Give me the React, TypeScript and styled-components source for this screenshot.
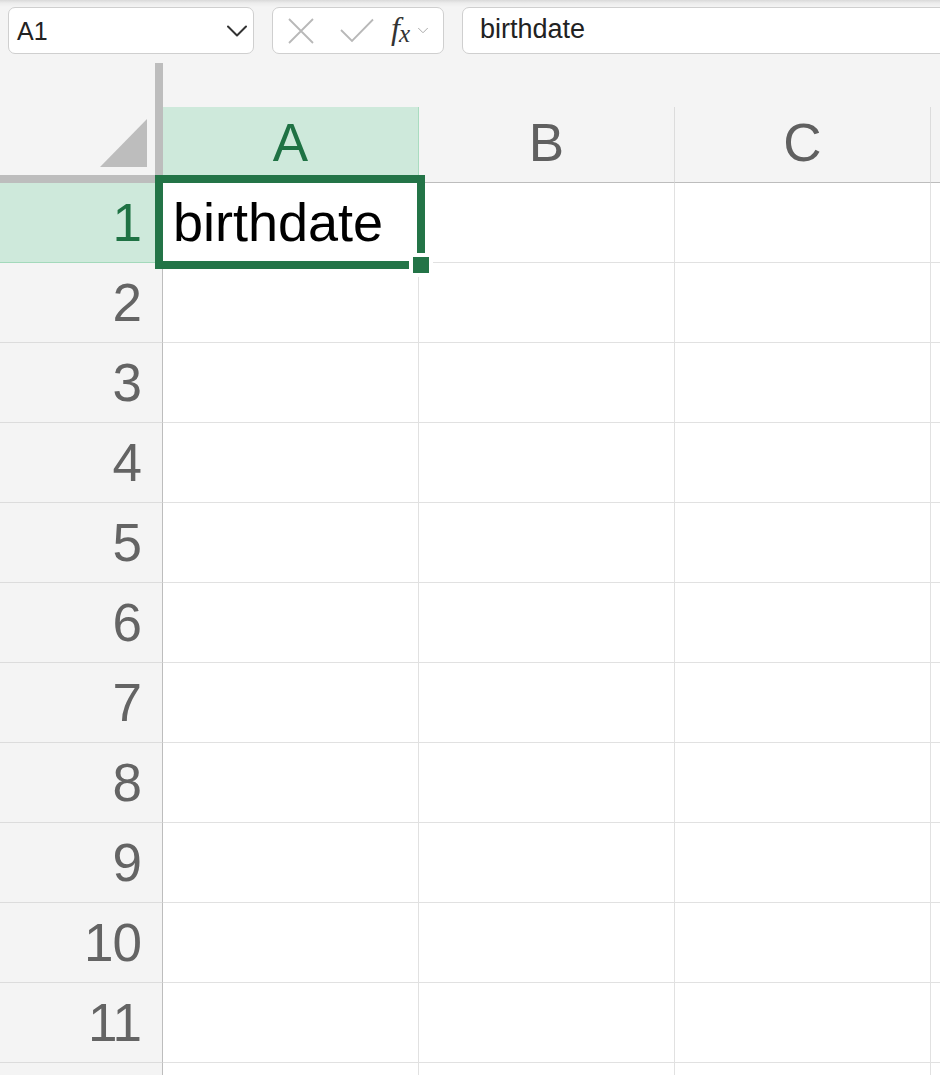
import React from "react"
import styled, { createGlobalStyle } from "styled-components"

const GlobalStyle = createGlobalStyle`
	html, body {
		margin: 0;
		padding: 0;
		background: #f4f4f4;
		overflow: hidden;
	}
	* {
		box-sizing: border-box;
	}
`

const GREEN = "#237447"
const GREEN_LIGHT = "#cee9db"
const COLS = ["A", "B", "C", ""]
// the last row only peeks in at the bottom edge, its label is off screen
const ROWS = [1, 2, 3, 4, 5, 6, 7, 8, 9, 10, 11, 0]

const Page = styled.div`
	width: 940px;
	height: 1075px;
	overflow: hidden;
	font-family: "Liberation Sans", Arial, sans-serif;
`

const Toolbar = styled.div`
	display: flex;
	gap: 18px;
	height: 54px;
	padding: 7px 0 0 8px;
	background: linear-gradient(#d9d9d9 0px, #ececec 3px, #f4f4f4 7px);
`

const Field = styled.div<{ $width?: number }>`
	display: flex;
	align-items: center;
	height: 47px;
	width: ${(p) => (p.$width ? `${p.$width}px` : "auto")};
	flex: ${(p) => (p.$width ? "none" : "1")};
	background: #fff;
	border: 1.5px solid #cfcfcf;
	border-radius: 7px;
	color: #222;
`

const NameText = styled.span`
	flex: 1;
	padding-left: 8px;
	font-size: 25px;
	padding-top: 2px;
`

const FormulaField = styled(Field)`
	margin-right: -20px;
	padding-left: 17px;
	font-size: 27px;
	padding-bottom: 3px;
`

const ActionRow = styled(Field)`
	padding-left: 15px;
`

const Fx = styled.span`
	margin-left: 17px;
	font-family: "Liberation Serif", serif;
	font-style: italic;
	font-size: 32px;
	color: #333;
	letter-spacing: -1px;
	padding-bottom: 4px;

	sub {
		font-size: 25px;
		vertical-align: -3px;
	}
`

const Sheet = styled.div`
	display: grid;
	grid-template-columns: 163px repeat(4, 256px);
	grid-template-rows: 129px;
	grid-auto-rows: 80px;
	font-size: 53px;
`

const Corner = styled.div`
	align-self: end;
	height: 120px;
	display: flex;
	justify-content: flex-end;
	align-items: flex-end;
	padding: 0 8px 8px 0;
	border-right: 8px solid #bdbdbd;
	border-bottom: 8px solid #bdbdbd;
`

const CornerTriangle = styled.div`
	width: 47px;
	height: 48px;
	background: #bdbdbd;
	clip-path: polygon(100% 0, 100% 100%, 0 100%);
`

const ColHeader = styled.div<{ $active?: boolean }>`
	align-self: end;
	height: 76px;
	display: flex;
	justify-content: center;
	align-items: center;
	padding-bottom: 4px;
	background: ${(p) => (p.$active ? GREEN_LIGHT : "#f4f4f4")};
	color: ${(p) => (p.$active ? "#1f7244" : "#606060")};
	border-right: 1px solid ${(p) => (p.$active ? "#a9dcc0" : "#dcdcdc")};
	border-bottom: 1px solid #bdbdbd;
`

const RowHeader = styled.div<{ $active?: boolean }>`
	display: flex;
	justify-content: flex-end;
	align-items: center;
	padding-right: 21px;
	line-height: 80px;
	letter-spacing: -1px;
	background: ${(p) => (p.$active ? GREEN_LIGHT : "#f4f4f4")};
	color: ${(p) => (p.$active ? "#1f7244" : "#646464")};
	border-right: 1px solid #bdbdbd;
	border-bottom: 1px solid ${(p) => (p.$active ? "#a3d9bb" : "#dcdcdc")};
`

const Cell = styled.div<{ $selected?: boolean }>`
	position: relative;
	z-index: ${(p) => (p.$selected ? 2 : 0)};
	background: #fff;
	border-right: 1px solid #e1e1e1;
	border-bottom: 1px solid #e1e1e1;
	padding-left: 10px;
	font-size: 54px;
	line-height: 79px;
	color: #000;
	white-space: nowrap;
`

const Selection = styled.div`
	position: absolute;
	top: -8px;
	left: -8px;
	width: 270px;
	height: 94px;
	border: 8px solid ${GREEN};
	pointer-events: none;
`

const FillHandle = styled.div`
	position: absolute;
	left: 250px;
	top: 74px;
	width: 16px;
	height: 16px;
	background: ${GREEN};
	box-shadow: 0 0 0 4px #fff;
`

const IconSlot = styled.span<{ $gap: number }>`
	display: flex;
	margin-left: ${(p) => p.$gap}px;
`

const Chevron = ({ size, color, stroke }: { size: number; color: string; stroke: number }) => (
	<svg width={size} height={size / 2 + 2} viewBox="0 0 20 12" fill="none">
		<path d="M1 1.5 L10 10.5 L19 1.5" stroke={color} strokeWidth={stroke} strokeLinecap="round" strokeLinejoin="round" />
	</svg>
)

const CancelIcon = () => (
	<svg width="26" height="26" viewBox="0 0 26 26" fill="none">
		<path d="M1 1 L25 25 M25 1 L1 25" stroke="#b8b8b8" strokeWidth="1.8" />
	</svg>
)

const EnterIcon = () => (
	<svg width="34" height="26" viewBox="0 0 34 26" fill="none">
		<path d="M1 12 L12 23 L33 1.5" stroke="#b8b8b8" strokeWidth="1.8" />
	</svg>
)

export default function App() {
	return (
		<Page>
			<GlobalStyle />
			<Toolbar>
				<Field $width={246}>
					<NameText>A1</NameText>
					<IconSlot $gap={0} style={{ marginRight: 6 }}>
						<Chevron size={20} color="#333" stroke={2} />
					</IconSlot>
				</Field>
				<ActionRow $width={172}>
					<CancelIcon />
					<IconSlot $gap={26}>
						<EnterIcon />
					</IconSlot>
					<Fx>
						f<sub>x</sub>
					</Fx>
					<IconSlot $gap={9}>
						<Chevron size={10} color="#aaa" stroke={2} />
					</IconSlot>
				</ActionRow>
				<FormulaField>birthdate</FormulaField>
			</Toolbar>
			<Sheet>
				<Corner>
					<CornerTriangle />
				</Corner>
				{COLS.map((c, i) => (
					<ColHeader key={i} $active={i === 0}>
						{c}
					</ColHeader>
				))}
				{ROWS.map((r, ri) => (
					<React.Fragment key={ri}>
						<RowHeader $active={r === 1}>{r || ""}</RowHeader>
						{COLS.map((_, ci) => {
							const selected = r === 1 && ci === 0
							return (
								<Cell key={ci} $selected={selected}>
									{selected && (
										<>
											birthdate
											<Selection />
											<FillHandle />
										</>
									)}
								</Cell>
							)
						})}
					</React.Fragment>
				))}
			</Sheet>
		</Page>
	)
}
